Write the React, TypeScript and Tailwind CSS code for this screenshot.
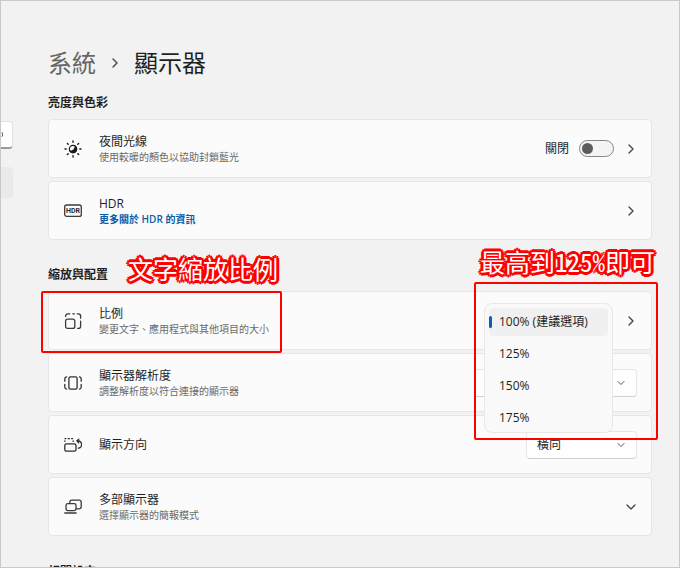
import { useState, type ReactNode } from "react"
import { ChevronDown, ChevronRight } from "lucide-react"

const scales = ["100% (建議選項)", "125%", "150%", "175%"]

const NightLightIcon = () => (
  <svg viewBox="0 0 18 18" className="w-[18px] h-[18px]" aria-hidden="true">
    <circle cx="9" cy="9" r="3.7" fill="none" stroke="#1b1b1b" strokeWidth="1.2" />
    <path d="M11.4 5.6A4.2 4.2 0 1 1 5 10.4C8.4 11 11 9 10.6 5.2Z" fill="#1b1b1b" />
    <path
      d="M9 1v1.2M9 15.8V17M1 9h1.2M15.8 9H17M3.4 3.4l.8.8M13.8 13.8l.8.8M3.4 14.6l.8-.8M13.8 4.2l.8-.8"
      stroke="#1b1b1b"
      strokeWidth="1.4"
      strokeLinecap="round"
    />
  </svg>
)

const HdrIcon = () => (
  <svg viewBox="0 0 18 18" className="w-[18px] h-[18px]" aria-hidden="true">
    <rect x=".7" y="3" width="16.6" height="11.4" rx="2" fill="none" stroke="#3a3a3a" strokeWidth="1.3" />
    <text x="9" y="11.2" textAnchor="middle" fontSize="7" fontWeight="700" fontFamily="Roboto, sans-serif" fill="#2a2a2a">
      HDR
    </text>
  </svg>
)

const ScaleIcon = () => (
  <svg viewBox="0 0 18 18" className="w-[18px] h-[18px]" fill="none" stroke="#3a3a3a" strokeWidth="1.3" strokeLinecap="round" aria-hidden="true">
    <rect x="1.6" y="7.2" width="9.2" height="9.2" rx="2" />
    <path d="M1.6 4.4V4a2.2 2.2 0 0 1 2.2-2.2h2M8.8 1.8h1.6M13.2 1.8h1.2A2.2 2.2 0 0 1 16.6 4v2.2M16.6 9.2v5a2.2 2.2 0 0 1-2.2 2.2h-.8" />
  </svg>
)

const ResolutionIcon = () => (
  <svg viewBox="0 0 18 18" className="w-[18px] h-[18px]" fill="none" stroke="#2f2f2f" strokeWidth="1.3" strokeLinecap="round" aria-hidden="true">
    <rect x="4.9" y="2.8" width="8.2" height="12.4" rx="1.6" />
    <path d="M2.6 2.9A2 2 0 0 0 .8 4.9v2.3M.8 10.4v2.7a2 2 0 0 0 1.8 2M15.4 2.9a2 2 0 0 1 1.8 2v2.3M17.2 10.4v2.7a2 2 0 0 1-1.8 2" />
  </svg>
)

const OrientationIcon = () => (
  <svg viewBox="0 0 18 18" className="w-[18px] h-[18px]" fill="none" stroke="#2f2f2f" strokeWidth="1.3" strokeLinecap="round" aria-hidden="true">
    <rect x=".8" y="7.8" width="11.2" height="7.4" rx="1.6" />
    <path d="M.9 5.4V4.8M1 2.7h.8M4.2 2.7h1.2M7.6 2.7h1M9.2 4.8v.6" />
    <path d="M14.8 3.2 12.9 4.8l1.8 2M13.4 4.8a3.7 3.7 0 0 1 1 7.4" />
  </svg>
)

const DisplaysIcon = () => (
  <svg viewBox="0 0 18 18" className="w-[18px] h-[18px]" fill="none" stroke="#3a3a3a" strokeWidth="1.3" strokeLinecap="round" aria-hidden="true">
    <rect x="2" y="5.6" width="10" height="7" rx="1.8" />
    <path d="M5.8 5.4V4.2a2 2 0 0 1 2-2h7.4a2 2 0 0 1 2 2v4.6a2 2 0 0 1-2 2h-3M.8 15h11.4" />
  </svg>
)

interface RowProps {
  icon: ReactNode
  title: ReactNode
  detail?: ReactNode
  children?: ReactNode
}

const Row = ({ icon, title, detail, children }: RowProps) => (
  <div className="flex items-center h-[59px] pl-[15px] pr-[14px] rounded border border-[#e6e6e6] bg-[#fbfbfb]">
    {icon}
    <div className="ml-[17px] flex-1 min-w-0">
      <div className="text-[12px] leading-4 text-[#1f1f1f]">{title}</div>
      {detail && <div className="text-[10px] leading-[14px] text-[#6a6a6a]">{detail}</div>}
    </div>
    {children}
  </div>
)

const OpenButton = ({ label }: { label: string }) => (
  <button type="button" aria-label={label} className="w-3 flex justify-center">
    <ChevronRight className="w-4 h-4 shrink-0 text-[#444]" strokeWidth={2} />
  </button>
)

interface DropdownProps {
  id: string
  options: string[]
  className: string
}

const Dropdown = ({ id, options, className }: DropdownProps) => (
  <div className={`relative ${className}`}>
    <select
      id={id}
      className="w-full h-7 pl-[10px] pr-7 appearance-none rounded border border-[#e6e6e6] border-b-[#cfcfcf] bg-[#fefefe] text-[12px] text-[#1f1f1f]"
    >
      {options.map((option) => (
        <option key={option}>{option}</option>
      ))}
    </select>
    <ChevronDown className="absolute right-[10px] top-2 w-3 h-3 text-[#555] pointer-events-none" />
  </div>
)

const Callout = ({ className, children }: { className: string; children: ReactNode }) => (
  <p
    className={`absolute z-20 text-[25px] leading-8 whitespace-nowrap font-['Noto_Sans_Mono_CJK_TC','Noto_Sans_CJK_TC',sans-serif] text-white [text-shadow:3px_0_#fe0000,-3px_0_#fe0000,0_3px_#fe0000,0_-3px_#fe0000,2px_2px_#fe0000,-2px_2px_#fe0000,2px_-2px_#fe0000,-2px_-2px_#fe0000,1px_0_#fe0000,-1px_0_#fe0000,0_1px_#fe0000,0_-1px_#fe0000] ${className}`}
  >
    {children}
  </p>
)

const App = () => {
  const [scale, setScale] = useState(scales[0])
  const [nightLight, setNightLight] = useState(false)

  return (
    <div className="flex h-screen overflow-hidden border border-[#c9c9c9] bg-[#f2f2f2] font-['Open_Sans','Noto_Sans_CJK_TC',sans-serif] text-[#1f1f1f]">
      <aside className="w-3 shrink-0 pt-[120px]">
        <div className="h-7 flex items-center rounded-r border border-l-0 border-[#e2e2e2] border-b-2 border-b-[#9a9a9a] bg-white overflow-hidden">
          <span className="w-[2px] h-[5px] rounded-r-full border-r border-[#555]" />
        </div>
        <div className="mt-[18px] h-[31px] rounded-r bg-[#eaeaea]" />
      </aside>

      <main className="flex-1 min-w-0 pl-[35px] pr-[27px] pt-[46px]">
        <h1 className="flex items-center h-8 text-[24px] leading-8">
          <a href="#system" className="text-[#666]">系統</a>
          <ChevronRight className="w-4 h-4 mx-[11px] text-[#444]" />
          <span>顯示器</span>
        </h1>

        <section>
          <h2 className="mt-4 mb-2 text-[12px] leading-4 font-semibold">亮度與色彩</h2>
          <div className="flex flex-col gap-[3px]">
            <Row icon={<NightLightIcon />} title="夜間光線" detail="使用較暖的顏色以協助封鎖藍光">
              <label htmlFor="night-light" className="mr-[10px] text-[12px]">
                {nightLight ? "開啟" : "關閉"}
              </label>
              <span className="relative mr-[11px] w-[35px] h-[17px]">
                <input
                  id="night-light"
                  type="checkbox"
                  role="switch"
                  checked={nightLight}
                  onChange={(e) => setNightLight(e.target.checked)}
                  className="peer block w-full h-full appearance-none rounded-full border border-[#868686] bg-[#f4f4f4] checked:bg-[#0067c0]"
                />
                <span className="absolute left-[3px] top-[3px] w-[11px] h-[11px] rounded-full bg-[#5c5c5c] pointer-events-none peer-checked:left-[21px] peer-checked:bg-white" />
              </span>
              <OpenButton label="夜間光線" />
            </Row>
            <Row
              icon={<HdrIcon />}
              title="HDR"
              detail={<a href="#hdr" className="font-semibold text-[#0a5fa8]">更多關於 HDR 的資訊</a>}
            >
              <OpenButton label="HDR" />
            </Row>
          </div>
        </section>

        <section>
          <h2 className="mt-[27px] mb-2 text-[12px] leading-4 font-semibold">縮放與配置</h2>
          <div className="relative flex flex-col gap-[3px]">
            <Row icon={<ScaleIcon />} title="比例" detail="變更文字、應用程式與其他項目的大小">
              <OpenButton label="比例" />
            </Row>
            <Row
              icon={<ResolutionIcon />}
              title={<label htmlFor="resolution">顯示器解析度</label>}
              detail="調整解析度以符合連接的顯示器"
            >
              <Dropdown id="resolution" className="w-[163px]" options={["1920 × 1080 (建議選項)", "1680 × 1050"]} />
            </Row>
            <Row icon={<OrientationIcon />} title={<label htmlFor="orientation">顯示方向</label>}>
              <Dropdown id="orientation" className="w-[111px]" options={["橫向", "直向"]} />
            </Row>
            <Row icon={<DisplaysIcon />} title="多部顯示器" detail="選擇顯示器的簡報模式">
              <button type="button" aria-label="多部顯示器" className="w-3 flex justify-center">
                <ChevronDown className="w-4 h-4 shrink-0 text-[#444]" />
              </button>
            </Row>

            {/* scale menu */}
            <div
              role="listbox"
              aria-label="比例"
              className="absolute z-10 top-3 right-[39px] w-[129px] px-1 pt-1 flex flex-col gap-1 rounded-lg border border-[#e8e8e8] bg-[#f9f9f9]"
            >
              {scales.map((item) => (
                <button
                  key={item}
                  type="button"
                  role="option"
                  aria-selected={item === scale}
                  onClick={() => setScale(item)}
                  className="relative h-7 pl-[10px] rounded text-left text-[12px] aria-selected:bg-[#f0f0f0]"
                >
                  {item === scale && <span className="absolute left-0 top-2 w-[3px] h-3 rounded-full bg-[#0a5fb4]" />}
                  {item}
                </button>
              ))}
            </div>

            {/* red callouts */}
            <div className="absolute z-20 -left-[7px] top-0 w-[241px] h-[62px] rounded-xs border-2 border-[#fe0000] pointer-events-none" />
            <div className="absolute z-20 -right-[6px] -top-[9px] w-[184px] h-[158px] rounded-xs border-2 border-[#fe0000] pointer-events-none" />
            <Callout className="left-20 -top-[39px]">文字縮放比例</Callout>
            <Callout className="-right-[3px] -top-[46px]">最高到125%即可</Callout>
          </div>
        </section>

        <h2 className="mt-7 text-[12px] leading-4 font-semibold">相關設定</h2>
      </main>
    </div>
  )
}

export default App
